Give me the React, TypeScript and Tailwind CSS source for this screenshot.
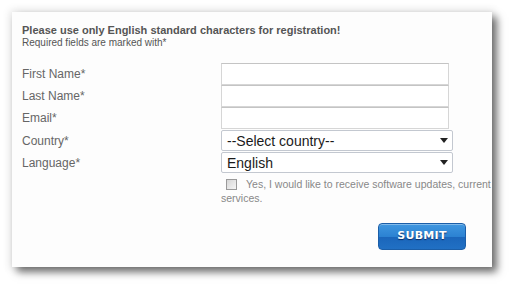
import React from "react";

const labelCls = "text-[12px] text-[#666] leading-none";

function TextRow({ label }: { label: string }) {
  return (
    <div className="flex h-[22px] items-center">
      <div className={"w-[199px] " + labelCls}>{label}</div>
      <div className="w-[228px] h-[22px] bg-white border border-[#d6d6d6] border-t-[#c4c4c4]" />
    </div>
  );
}

function SelectRow({ label, value }: { label: string; value: string }) {
  return (
    <div className="flex h-[21px] items-center mt-[1px]">
      <div className={"w-[199px] " + labelCls}>{label}</div>
      <div className="w-[232px] h-[21px] bg-white border border-[#c3c8d0] rounded-[2px] flex items-center justify-between pl-[5px] pr-[4px]">
        <span className="text-[14px] text-[#1a1a1a] leading-none">{value}</span>
        <svg width="8" height="5" viewBox="0 0 8 5">
          <path d="M0 0 L8 0 L4 5 Z" fill="#222" />
        </svg>
      </div>
    </div>
  );
}

export default function App() {
  return (
    <div
      className="w-[512px] h-[287px] bg-white pt-[12px] pl-[12px]"
      style={{ fontFamily: '"Liberation Sans", Arial, sans-serif' }}
    >
      <div className="w-[480px] h-[255px] bg-[#fdfdfd] pt-[12px] pl-[10px] shadow-[0_0_8px_2px_rgba(0,0,0,0.10),5px_5px_8px_rgba(0,0,0,0.55)] overflow-hidden">
        <div className="text-[11px] font-bold text-[#555] leading-[13px]">
          Please use only English standard characters for registration!
        </div>
        <div className="text-[10px] text-[#555] leading-[12px]">
          Required fields are marked with*
        </div>
        <div className="mt-[14px] flex flex-col">
          <TextRow label="First Name*" />
          <TextRow label="Last Name*" />
          <TextRow label="Email*" />
          <SelectRow label="Country*" value="--Select country--" />
          <SelectRow label="Language*" value="English" />
        </div>
        <div className="ml-[199px] mt-[4px] text-[10.5px] text-[#888] leading-[14px]">
          <div className="flex items-center whitespace-nowrap">
            <span className="shrink-0 ml-[5px] mr-[9px] w-[11px] h-[11px] border border-[#9a9a9a] bg-gradient-to-br from-[#d6d6d6] to-[#f6f6f6]" />
            <span>Yes, I would like to receive software updates, current</span>
          </div>
          <div>services.</div>
        </div>
        <div className="flex justify-end pr-[26px] mt-[18px]">
          <div className="w-[88px] h-[27px] rounded-[4px] border border-[#1b5ea8] bg-[linear-gradient(to_bottom,#3f97e0_0%,#2c82d2_50%,#1b66bb_52%,#2170c4_100%)] flex items-center justify-center shadow-[inset_0_1px_0_rgba(255,255,255,0.35)]">
            <span
              className="text-white font-bold text-[11px] tracking-[0.3px] [text-shadow:0_1px_1px_rgba(0,0,40,0.6)]"
              style={{ fontFamily: '"DejaVu Sans", Verdana, sans-serif' }}
            >
              SUBMIT
            </span>
          </div>
        </div>
      </div>
    </div>
  );
}
